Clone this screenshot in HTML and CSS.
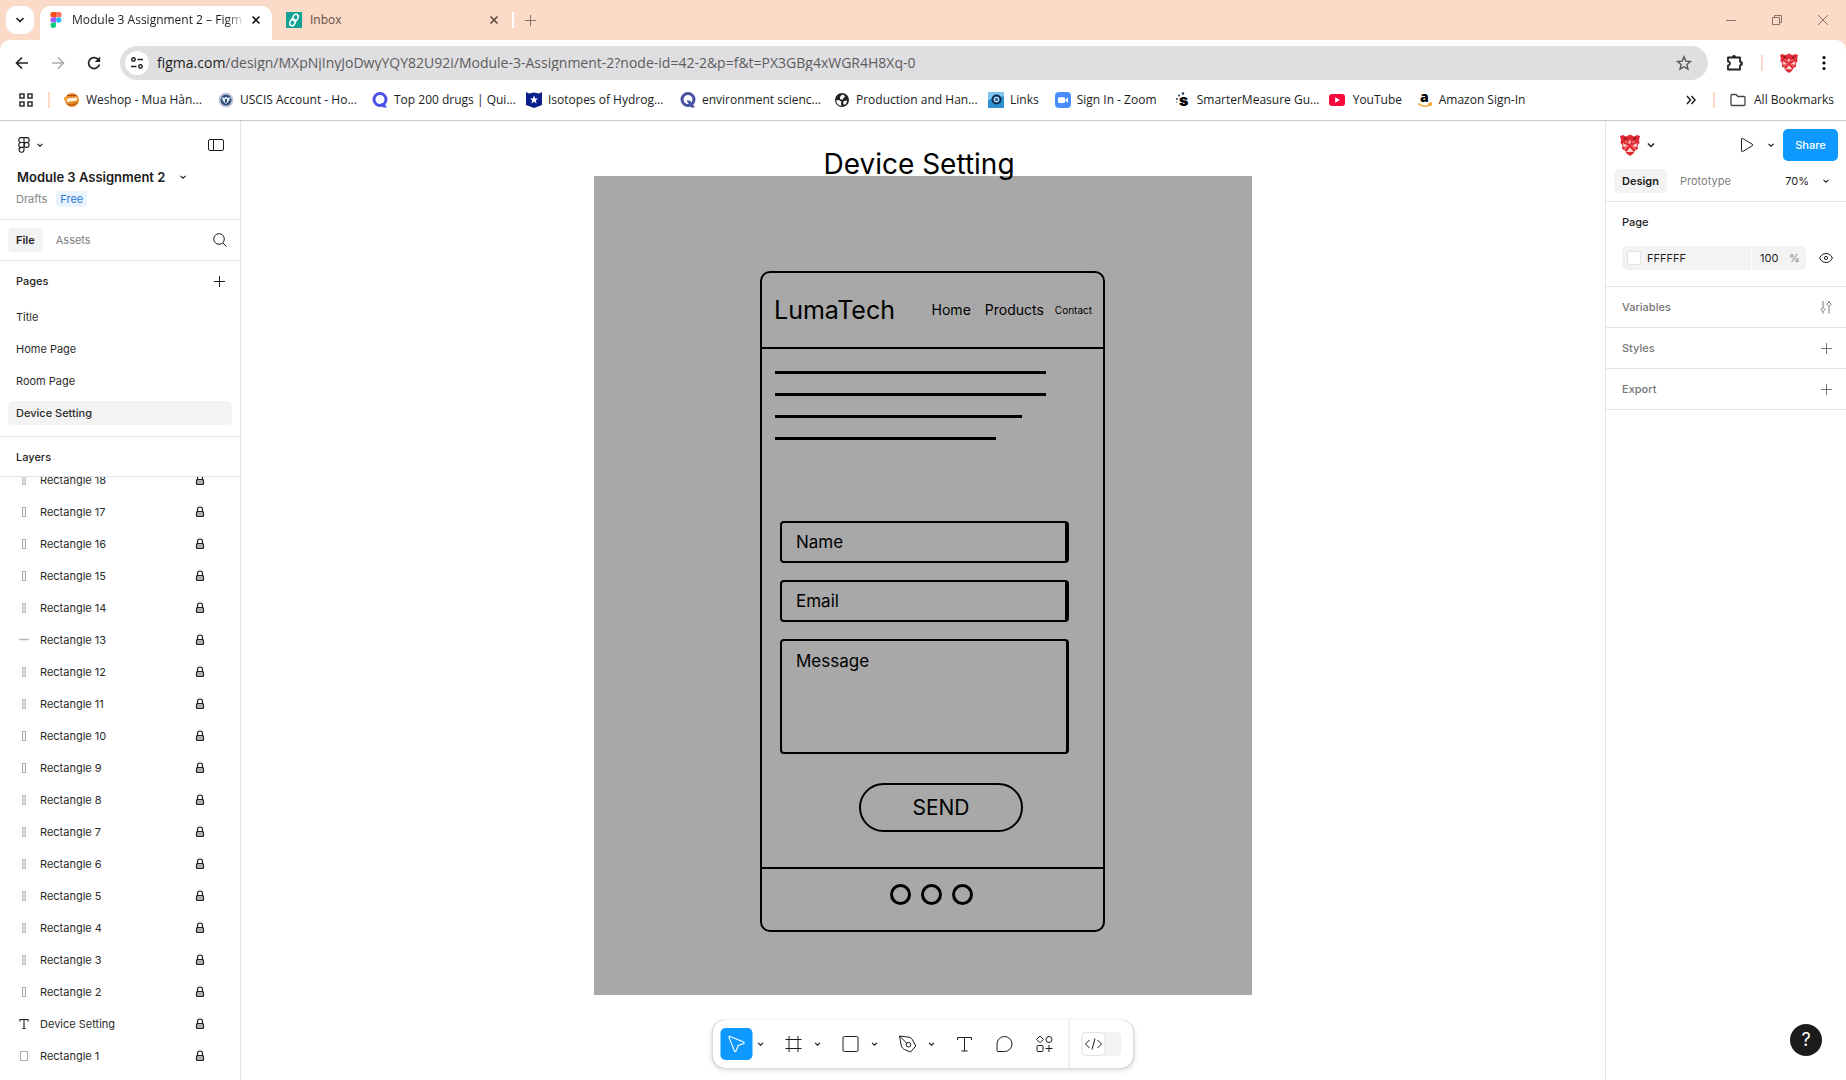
FILE: index.html
```html
<!DOCTYPE html>
<html lang="en">
<head>
<meta charset="utf-8">
<title>Module 3 Assignment 2 – Figma</title>
<link rel="stylesheet" href="styles.css">
</head>
<body>
<svg class="sprite" aria-hidden="true">
  <symbol id="chev" viewBox="0 0 8 8"><path d="M1.5 2.8L4 5.2l2.500-2.400" fill="none" stroke="currentColor" stroke-width="1.100"/></symbol>
  <symbol id="close" viewBox="0 0 10 10"><path d="M1.500 1.500l7 7M8.500 1.500l-7 7" fill="none" stroke="currentColor" stroke-width="1.600"/></symbol>
  <symbol id="plus" viewBox="0 0 12 12"><path d="M6.500 1v11M1 6.500h11" fill="none" stroke="currentColor"/></symbol>
  <symbol id="lock" viewBox="0 0 10 12"><path d="M2.500 5.500V3.500a2.500 2.500 0 0 1 5 0v2" fill="none" stroke="#1c1c1c" stroke-width="1.200"/><rect x="1.500" y="5.500" width="7" height="5" rx="1" fill="#b0b0b0" stroke="#1c1c1c" stroke-width="1.200"/></symbol>
  <symbol id="bar" viewBox="0 0 14 12"><rect x="5.500" y="1.500" width="3" height="9" fill="#fff" stroke="#aaa"/></symbol>
  <symbol id="barfill" viewBox="0 0 14 12"><rect x="5.500" y="1.500" width="3" height="9" fill="#ddd" stroke="#c4c4c4"/></symbol>
  <symbol id="dash" viewBox="0 0 14 12"><path d="M2 5.500h10" stroke="#bbb" stroke-width="1.500"/></symbol>
  <symbol id="box" viewBox="0 0 14 12"><rect x="3.500" y="1.500" width="7" height="9" fill="none" stroke="#aaa"/></symbol>
  <symbol id="tee" viewBox="0 0 14 12"><path d="M3 3.500v-2h8v2M7 1.500v9M5.500 10.500h3" fill="none" stroke="#1c1c1c" stroke-width="1.100"/></symbol>
  <symbol id="crest" viewBox="0 0 20 22">
    <path d="M0 2l3-1 3 1.500L10 .5l4 2L17 1l3 1-1 4 .5 3-2 2.500.5 3.500-3 1.500-1.500 3L10 22l-3.500-2.500-1.500-3-3-1.500.5-3.500L.5 9 1 6z" fill="#e02a34"/>
    <path d="M3 9.500l4 2-3 1.500zM17 9.500l-4 2 3 1.500zM10 14l1.500 2-1.500 2-1.500-2zM9.500 6l1.500 2-2 2zM4 15.500l4.500-4M16 15.500l-4.500-4M6.500 18l3.500-4 3.500 4M5 7.500l3 1M15 7.500l-3 1" fill="#ffd9d9" stroke="#ffc8c8" stroke-width=".7"/>
    <path d="M3 3l4 1.500-1 1.500zM17 3l-4 1.500 1 1.500z" fill="#601018"/>
  </symbol>
</svg>

<header class="browser">
  <div class="tabstrip">
    <button class="tabsearch" aria-label="Search tabs"><svg width="12" height="12" viewBox="0 0 12 12"><path d="M2.500 4l3.500 3.500L9.500 4" fill="none" stroke="#222" stroke-width="1.700"/></svg></button>
    <div class="tab tab-active">
      <svg width="12" height="16" viewBox="0 0 12 16"><path d="M3 0h3v5.300H3A2.650 2.650 0 0 1 3 0z" fill="#f24e1e"/><path d="M6 0h3a2.650 2.650 0 0 1 0 5.300H6z" fill="#ff7262"/><path d="M3 5.300h3v5.300H3a2.650 2.650 0 0 1 0-5.300z" fill="#a259ff"/><circle cx="8.700" cy="8" r="2.650" fill="#1abcfe"/><path d="M3 10.600h3v2.700a2.700 2.700 0 1 1-3-2.700z" fill="#0acf83"/></svg>
      <span class="tab-title">Module 3 Assignment 2 – Figm</span>
      <button class="tab-close" aria-label="Close tab"><svg width="10" height="10"><use href="#close"/></svg></button>
    </div>
    <div class="tab tab-idle">
      <svg width="16" height="16" viewBox="0 0 16 16"><rect width="16" height="16" fill="#12a192"/><g fill="none" stroke="#fff" stroke-width="1.500"><rect x="7" y="2.200" width="4.800" height="7" rx="2.400" transform="rotate(25 9.400 5.700)"/><rect x="4.200" y="6.800" width="4.800" height="7" rx="2.400" transform="rotate(25 6.600 10.300)"/></g></svg>
      <span class="tab-title">Inbox</span>
      <button class="tab-close" aria-label="Close tab"><svg width="10" height="10"><use href="#close"/></svg></button>
    </div>
    <i class="tab-sep"></i>
    <button class="newtab" aria-label="New tab"><svg width="12" height="12"><use href="#plus"/></svg></button>
    <div class="wincontrols">
      <button aria-label="Minimize"><svg width="12" height="12" viewBox="0 0 12 12"><path d="M1 6.500h10" stroke="#8a7166"/></svg></button>
      <button aria-label="Restore"><svg width="12" height="12" viewBox="0 0 12 12"><path d="M1.500 3.500h7v7h-7zM3.500 3.500v-2h7v7h-2" fill="none" stroke="#8a7166"/></svg></button>
      <button aria-label="Close"><svg width="12" height="12" viewBox="0 0 12 12"><path d="M1 1l10 10M11 1L1 11" stroke="#8a7166"/></svg></button>
    </div>
  </div>

  <div class="navbar">
    <button class="navbtn" aria-label="Back"><svg width="16" height="16" viewBox="0 0 16 16"><path d="M14 8H3M8 2.500L2.500 8 8 13.500" fill="none" stroke="#222" stroke-width="1.700"/></svg></button>
    <button class="navbtn" aria-label="Forward"><svg width="16" height="16" viewBox="0 0 16 16"><path d="M2 8h11M8 2.500L13.500 8 8 13.500" fill="none" stroke="#aaa" stroke-width="1.500"/></svg></button>
    <button class="navbtn" aria-label="Reload"><svg width="16" height="16" viewBox="0 0 16 16"><path d="M13.400 9.500A5.500 5.500 0 1 1 12 4.200L13.500 6" fill="none" stroke="#222" stroke-width="1.700"/><path d="M14.200 1.500V7H8.700z" fill="#222"/></svg></button>
    <div class="omnibox">
      <button class="siteinfo" aria-label="Site information"><svg width="14" height="14" viewBox="0 0 14 14"><g fill="none" stroke="#222" stroke-width="1.500"><circle cx="3.500" cy="3.500" r="1.700"/><path d="M7.500 3.500H13M1 10.500h5.500"/><circle cx="10.500" cy="10.500" r="1.700"/></g></svg></button>
      <label for="url">figma.com</label><input id="url" type="text" value="/design/MXpNjInyJoDwyYQY82U92i/Module-3-Assignment-2?node-id=42-2&amp;p=f&amp;t=PX3GBg4xWGR4H8Xq-0">
      <button class="star" aria-label="Bookmark this tab"><svg width="16" height="16" viewBox="0 0 16 16"><path d="M8 1.800l1.800 4.300 4.700.4-3.600 3 1.100 4.600L8 11.700l-4 2.400 1.100-4.600-3.600-3 4.700-.4z" fill="none" stroke="#555" stroke-width="1.300"/></svg></button>
    </div>
    <button class="ext" aria-label="Extensions"><svg width="18" height="18" viewBox="0 0 18 18"><path d="M2 3.500h12v4.200a1.800 1.800 0 0 1 0 3.600v4.200H2v-4a2 2 0 0 0 0-4z" fill="none" stroke="#222" stroke-width="1.800" stroke-linejoin="round"/><path d="M6 3a2 2 0 0 1 4 0zM14.500 7.500a2 2 0 0 1 0 4z" fill="#222"/></svg></button>
    <i class="peach"></i>
    <button class="profile" aria-label="Profile"><svg width="18" height="20"><use href="#crest"/></svg></button>
    <button class="kebab" aria-label="Menu"><svg width="4" height="16" viewBox="0 0 4 16"><circle cx="2" cy="2.500" r="1.600"/><circle cx="2" cy="8" r="1.600"/><circle cx="2" cy="13.500" r="1.600"/></svg></button>
  </div>

  <nav class="bookmarks" aria-label="Bookmarks">
    <button class="apps" aria-label="Apps"><svg width="14" height="14" viewBox="0 0 14 14"><path d="M1 1h4v4H1zM9 1h4v4H9zM1 9h4v4H1zM9 9h4v4H9z" fill="none" stroke="#333" stroke-width="1.600"/></svg></button>
    <i class="peach"></i>
    <a class="bm bm-long" href="#"><svg width="16" height="16" viewBox="0 0 16 16"><circle cx="8" cy="8" r="7" fill="#e88a2a"/><path d="M2 6.500l11-1v3L3 10z" fill="#fff3e2"/><path d="M3 3.500h9M4 12.500c3 1 6 .5 9-1.500" stroke="#9c4d0d" fill="none"/><path d="M0 5l4 1-1 3-3-1z" fill="#f6a53a"/></svg>Weshop - Mua Hàn...</a>
    <a class="bm bm-long" href="#"><svg width="16" height="16" viewBox="0 0 16 16"><circle cx="8" cy="8" r="7.500" fill="#c3cbd8"/><circle cx="8" cy="8" r="5.500" fill="#2d4f7c"/><path d="M3.500 5l3 1L8 4.500 9.500 6l3-1-1.500 4-3 3-3-3z" fill="#e6ebf2"/><path d="M7 7h2v3L8 11 7 10z" fill="#2d4f7c"/></svg>USCIS Account - Ho...</a>
    <a class="bm bm-long" href="#"><svg width="16" height="16" viewBox="0 0 16 16"><circle cx="8" cy="7.500" r="6" fill="none" stroke="#4b52e8" stroke-width="3"/><path d="M9 11h3l3 4.500h-4z" fill="#4b52e8"/></svg>Top 200 drugs | Qui...</a>
    <a class="bm bm-long" href="#"><svg width="16" height="16" viewBox="0 0 16 16"><path d="M0 0l3 1.500L8 .5l5 1L16 0v13l-8 3-8-3z" fill="#0c1e8c"/><path d="M8 3.500l1.200 3H12L9.800 8.400l.8 3L8 9.700l-2.600 1.700.8-3L4 6.500h2.800z" fill="#fff"/></svg>Isotopes of Hydrog...</a>
    <a class="bm bm-long" href="#"><svg width="16" height="16" viewBox="0 0 16 16"><circle cx="8" cy="7.500" r="6" fill="none" stroke="#4553a0" stroke-width="3"/><path d="M6.500 8.500h3.500l5 7h-4z" fill="#4553a0"/></svg>environment scienc...</a>
    <a class="bm bm-long" href="#"><svg width="16" height="16" viewBox="0 0 16 16"><circle cx="8" cy="8" r="7" fill="#222"/><path d="M2.500 8l3 .3 2 1.500-.5 2 .5 2C4 13.500 2 11 2.500 8zM6 5l2-2.500 2 .5 1 2-2 1.500-.5 1.500L6 7zM10 9l3-.5c0 2-1 3.500-2.500 4.500L9 11z" fill="#fff"/></svg>Production and Han...</a>
    <a class="bm" href="#"><svg width="16" height="16" viewBox="0 0 16 16"><rect width="16" height="16" rx="1" fill="#2e8fd0"/><path d="M0 0h16v4L0 8z" fill="#7cc5ee"/><circle cx="8.500" cy="7.500" r="4" fill="#9fd6f5" stroke="#102b4c" stroke-width="2"/><circle cx="8.500" cy="7.500" r="1.500" fill="#2a5b8d"/></svg>Links</a>
    <a class="bm bm-zoom" href="#"><svg width="16" height="16" viewBox="0 0 16 16"><rect width="16" height="16" rx="4" fill="#4a8cff"/><rect x="3" y="5.200" width="7" height="5.800" rx="1.300" fill="#fff"/><path d="M10.500 7.400L13 5.500v5.200l-2.500-1.800z" fill="#fff"/></svg>Sign In - Zoom</a>
    <a class="bm bm-long" href="#"><svg width="16" height="16" viewBox="0 0 16 16"><text x="4" y="14" class="ico-s">s</text><g fill="#1d3557"><circle cx="2" cy="7" r=".9"/><circle cx="4" cy="3.500" r="1"/><circle cx="8" cy="1.500" r="1.200"/><circle cx="1.500" cy="10" r=".6"/></g></svg>SmarterMeasure Gu...</a>
    <a class="bm bm-yt" href="#"><svg width="18" height="16" viewBox="0 0 18 16"><rect y="2" width="16" height="12" rx="3" fill="#f6083c"/><path d="M6.200 5.300L11 8l-4.800 2.700z" fill="#fff"/></svg>YouTube</a>
    <a class="bm" href="#"><svg width="16" height="16" viewBox="0 0 16 16"><text x="3" y="10" class="ico-a">a</text><path d="M1 11.500c4 3.300 9 3.300 12.500.8M11.500 11.500l2.800-.2-.8 2.700" fill="none" stroke="#f59d1b" stroke-width="1.500"/></svg>Amazon Sign-In</a>
    <button class="more" aria-label="More bookmarks"><svg width="10" height="10" viewBox="0 0 10 10"><path d="M1 1l3.500 4L1 9M5.500 1L9 5 5.500 9" fill="none" stroke="#222" stroke-width="1.500"/></svg></button>
    <i class="peach"></i>
    <a class="bm bm-all" href="#"><svg width="16" height="14" viewBox="0 0 16 14"><path d="M1 2.500a1 1 0 0 1 1-1h4L8 3.500h6a1 1 0 0 1 1 1v7a1 1 0 0 1-1 1H2a1 1 0 0 1-1-1z" fill="none" stroke="#444" stroke-width="1.300"/></svg>All Bookmarks</a>
  </nav>
</header>

<div class="app">
  <aside class="left">
    <section class="filehead">
      <div class="row">
        <button class="menu" aria-label="Main menu"><svg width="12" height="16" viewBox="0 0 12 16"><path d="M6 .6H3.200a2.450 2.450 0 0 0 0 4.900H6zM6 .6h2.800a2.450 2.450 0 0 1 0 4.900H6zM6 5.500H3.200a2.450 2.450 0 0 0 0 4.900H6zM6 10.400H3.200A2.450 2.450 0 1 0 6 12.800z" fill="none" stroke="#1c1c1c" stroke-width="1.100"/><circle cx="8.600" cy="7.950" r="2.450" fill="none" stroke="#1c1c1c" stroke-width="1.100"/></svg><svg width="8" height="8"><use href="#chev"/></svg></button>
        <button class="push" aria-label="Minimize UI"><svg width="16" height="12" viewBox="0 0 16 12"><rect x=".5" y=".5" width="15" height="11" rx="1.500" fill="none" stroke="#1c1c1c"/><path d="M5.500 .5v11" stroke="#1c1c1c"/></svg></button>
      </div>
      <button class="filename">Module 3 Assignment 2<svg width="8" height="8"><use href="#chev"/></svg></button>
      <div class="crumbs"><a href="#">Drafts</a><span class="badge">Free</span></div>
    </section>
    <div class="lefttabs">
      <button class="pill pill-on">File</button><button class="pill">Assets</button>
      <button class="push" aria-label="Search"><svg width="14" height="14" viewBox="0 0 14 14"><circle cx="6" cy="6" r="5.300" fill="none" stroke="#1c1c1c"/><path d="M9.800 9.800L13.500 13.500" stroke="#1c1c1c"/></svg></button>
    </div>
    <section class="pages">
      <div class="sectionhead"><h2>Pages</h2><button class="push" aria-label="Add page"><svg width="12" height="12"><use href="#plus"/></svg></button></div>
      <ul>
        <li><a href="#">Title</a></li>
        <li><a href="#">Home Page</a></li>
        <li><a href="#">Room Page</a></li>
        <li><a href="#" class="current">Device Setting</a></li>
      </ul>
    </section>
    <div class="sectionhead layershead"><h2>Layers</h2></div>
    <ul class="layers">
      <li><svg><use href="#barfill"/></svg><span>Rectangle 18</span><svg class="lock"><use href="#lock"/></svg></li>
      <li><svg><use href="#bar"/></svg><span>Rectangle 17</span><svg class="lock"><use href="#lock"/></svg></li>
      <li><svg><use href="#bar"/></svg><span>Rectangle 16</span><svg class="lock"><use href="#lock"/></svg></li>
      <li><svg><use href="#bar"/></svg><span>Rectangle 15</span><svg class="lock"><use href="#lock"/></svg></li>
      <li><svg><use href="#barfill"/></svg><span>Rectangle 14</span><svg class="lock"><use href="#lock"/></svg></li>
      <li><svg><use href="#dash"/></svg><span>Rectangle 13</span><svg class="lock"><use href="#lock"/></svg></li>
      <li><svg><use href="#barfill"/></svg><span>Rectangle 12</span><svg class="lock"><use href="#lock"/></svg></li>
      <li><svg><use href="#barfill"/></svg><span>Rectangle 11</span><svg class="lock"><use href="#lock"/></svg></li>
      <li><svg><use href="#bar"/></svg><span>Rectangle 10</span><svg class="lock"><use href="#lock"/></svg></li>
      <li><svg><use href="#bar"/></svg><span>Rectangle 9</span><svg class="lock"><use href="#lock"/></svg></li>
      <li><svg><use href="#barfill"/></svg><span>Rectangle 8</span><svg class="lock"><use href="#lock"/></svg></li>
      <li><svg><use href="#barfill"/></svg><span>Rectangle 7</span><svg class="lock"><use href="#lock"/></svg></li>
      <li><svg><use href="#barfill"/></svg><span>Rectangle 6</span><svg class="lock"><use href="#lock"/></svg></li>
      <li><svg><use href="#barfill"/></svg><span>Rectangle 5</span><svg class="lock"><use href="#lock"/></svg></li>
      <li><svg><use href="#barfill"/></svg><span>Rectangle 4</span><svg class="lock"><use href="#lock"/></svg></li>
      <li><svg><use href="#barfill"/></svg><span>Rectangle 3</span><svg class="lock"><use href="#lock"/></svg></li>
      <li><svg><use href="#bar"/></svg><span>Rectangle 2</span><svg class="lock"><use href="#lock"/></svg></li>
      <li><svg><use href="#tee"/></svg><span>Device Setting</span><svg class="lock"><use href="#lock"/></svg></li>
      <li><svg><use href="#box"/></svg><span>Rectangle 1</span><svg class="lock"><use href="#lock"/></svg></li>
    </ul>
  </aside>

  <main class="canvas">
    <h1 class="artname">Device Setting</h1>
    <div class="artboard">
      <div class="phone">
        <div class="phone-head">
          <strong>LumaTech</strong>
          <a href="#" class="l-home">Home</a><a href="#" class="l-products">Products</a><a href="#" class="l-contact">Contact</a>
        </div>
        <form class="phone-body">
          <div class="copy"><i></i><i></i><i class="mid"></i><i class="short"></i></div>
          <label class="field">Name<input type="text"></label>
          <label class="field">Email<input type="text"></label>
          <label class="field field-tall">Message<textarea></textarea></label>
          <button class="send" type="button">SEND</button>
        </form>
        <div class="phone-foot"><i></i><i></i><i></i></div>
      </div>
    </div>

    <div class="toolbar" role="toolbar" aria-label="Tools">
      <button class="tool tool-on" aria-label="Move"><svg width="18" height="18" viewBox="0 0 18 18"><path d="M1.500 2.400c-.3-.8.300-1.300 1-1l13.700 5.500c.8.300.7 1.300 0 1.600L10.700 10.500 8.500 16c-.3.800-1.300.8-1.600 0z" fill="none" stroke="#fff" stroke-width="1.100"/></svg></button>
      <button class="drop" aria-label="Move tools"><svg width="8" height="8"><use href="#chev"/></svg></button>
      <button class="tool" aria-label="Frame"><svg width="16" height="16" viewBox="0 0 16 16"><path d="M3.500 0v16M12.500 0v16M0 3.500h16M0 12.500h16" stroke="#1c1c1c"/></svg></button>
      <button class="drop" aria-label="Region tools"><svg width="8" height="8"><use href="#chev"/></svg></button>
      <button class="tool" aria-label="Rectangle"><svg width="16" height="16" viewBox="0 0 16 16"><rect x=".5" y=".5" width="15" height="15" rx="1.500" fill="none" stroke="#1c1c1c"/></svg></button>
      <button class="drop" aria-label="Shape tools"><svg width="8" height="8"><use href="#chev"/></svg></button>
      <button class="tool" aria-label="Pen"><svg width="18" height="18" viewBox="0 0 18 18"><g fill="none" stroke="#1c1c1c"><path d="M1 1l9.500 1.200c1.500.3 2.800 1.300 3.500 2.700l3.300 6.100-5.300 6-6-2.500c-1.600-.7-2.800-2-3.200-3.700z" stroke-linejoin="round"/><path d="M1 1l7.300 7.300"/><circle cx="10" cy="9.700" r="2.300"/></g></svg></button>
      <button class="drop" aria-label="Drawing tools"><svg width="8" height="8"><use href="#chev"/></svg></button>
      <button class="tool" aria-label="Text"><svg width="16" height="16" viewBox="0 0 16 16"><path d="M1 4V1.500h14V4M8 1.500v13.500M5 15h6" fill="none" stroke="#1c1c1c"/></svg></button>
      <button class="tool gap" aria-label="Comment"><svg width="16" height="16" viewBox="0 0 16 16"><path d="M.5 8A7.500 7.500 0 1 1 8 15.500H1.500a1 1 0 0 1-1-1z" fill="none" stroke="#1c1c1c"/></svg></button>
      <button class="tool gap" aria-label="Actions"><svg width="18" height="18" viewBox="0 0 18 18"><g fill="none" stroke="#1c1c1c"><path d="M4.500 1l3.400 3.400-3.400 3.400L1.100 4.400z" stroke-linejoin="round"/><circle cx="13.500" cy="4.500" r="3"/><rect x="1.500" y="10.500" width="6" height="6" rx="1"/><path d="M13.500 10v7M10 13.500h7"/></g></svg></button>
      <i class="toolsep"></i>
      <button class="devmode" aria-label="Dev Mode"><svg width="24" height="24" viewBox="0 0 24 24"><rect x=".5" y=".5" width="23" height="23" rx="4.500" fill="#fff" stroke="#e2e2e2"/><path d="M8 8l-4 4 4 4M16 8l4 4-4 4M13.500 6.500l-3 11" fill="none" stroke="#1c1c1c"/></svg></button>
    </div>
  </main>

  <aside class="right">
    <section class="share">
      <div class="row">
        <button class="who" aria-label="Account"><svg width="20" height="22"><use href="#crest"/></svg><svg width="10" height="10"><use href="#chev"/></svg></button>
        <button class="play push" aria-label="Present"><svg width="14" height="16" viewBox="0 0 14 16"><path d="M1.500 2v12c0 .6.500.9 1 .6l10-5.900c.5-.3.500-1 0-1.300l-10-6c-.5-.300-1 0-1 .6z" fill="none" stroke="#1c1c1c"/></svg></button>
        <button class="drop" aria-label="Present options"><svg width="8" height="8"><use href="#chev"/></svg></button>
        <button class="sharebtn">Share</button>
      </div>
      <div class="righttabs"><button class="pill pill-on">Design</button><button class="pill">Prototype</button><button class="zoom push">70%<svg width="8" height="8"><use href="#chev"/></svg></button></div>
    </section>
    <section class="pageprops">
      <h2>Page</h2>
      <div class="fill">
        <div class="fillfield"><i></i><input class="hex" aria-label="Color" value="FFFFFF"><input class="pct" id="pct" aria-label="Opacity" value="100"><label for="pct">%</label></div>
        <button aria-label="Toggle visibility"><svg width="14" height="12" viewBox="0 0 14 12"><path d="M.6 6C2 3 4.300 1.500 7 1.500S12 3 13.400 6C12 9 9.700 10.500 7 10.500S2 9 .6 6z" fill="none" stroke="#1c1c1c"/><circle cx="7" cy="6" r="1.600" fill="none" stroke="#1c1c1c"/></svg></button>
      </div>
    </section>
    <section class="prop"><h2>Variables</h2><button aria-label="Open variables"><svg width="12" height="14" viewBox="0 0 12 14"><g fill="none" stroke="#777"><path d="M3 1v6.500M3 12v1.500M9 1v1M9 6.500v7"/><path d="M3 7.300l2.200 2.200L3 11.700.8 9.500zM9 2l2.200 2.200L9 6.400 6.800 4.200z"/></g></svg></button></section>
    <section class="prop"><h2>Styles</h2><button aria-label="Add style"><svg width="12" height="12"><use href="#plus"/></svg></button></section>
    <section class="prop"><h2>Export</h2><button aria-label="Add export"><svg width="12" height="12"><use href="#plus"/></svg></button></section>
    <button class="help" aria-label="Help">?</button>
  </aside>
</div>
</body>
</html>
```
FILE: styles.css
```css
* { box-sizing: border-box; }
body {
  margin: 0;
  height: 100vh;
  display: flex;
  flex-direction: column;
  overflow: hidden;
  background: #fff;
  color: #1c1c1c;
  font: 11px/16px Inter, sans-serif;
}
button, input, textarea { margin: 0; padding: 0; border: 0; background: none; color: inherit; font: inherit; outline: 0; }
button { display: flex; align-items: center; justify-content: center; flex: none; }
a { color: inherit; text-decoration: none; }
ul { margin: 0; padding: 0; list-style: none; }
h1, h2 { margin: 0; font: inherit; }
svg { flex: none; display: block; overflow: visible; }
.sprite { position: absolute; width: 0; height: 0; }
.push { margin-left: auto; }

/* browser chrome */
.browser {
  flex: none;
  background: #fcdac8;
  border-bottom: 1px solid #c9c9c9;
  font: 12px/16px "Open Sans", sans-serif;
}
.tabstrip { display: flex; align-items: center; height: 40px; padding-left: 6px; }
.tabsearch { width: 28px; height: 28px; border-radius: 10px; background: #fff; }
.tab { display: flex; align-items: center; }
.tab-title { flex: 1; white-space: nowrap; }
.tab-close { width: 16px; height: 16px; }
.tab-active {
  align-self: flex-end;
  width: 232px;
  height: 34px;
  margin-left: 6px;
  padding: 0 8px 6px 10px;
  gap: 10px;
  border-radius: 10px 10px 0 0;
  background: #fff;
}
.tab-active .tab-close { margin-left: -6px; }
.tab-active .tab-title { -webkit-mask-image: linear-gradient(90deg, #000 90%, transparent); mask-image: linear-gradient(90deg, #000 90%, transparent); }
.tab-idle { width: 216px; margin-left: 14px; gap: 8px; color: #5b4a42; }
.tab-sep { width: 2px; height: 16px; margin: 0 8px 0 10px; background: #fff; }
.newtab { width: 16px; height: 16px; color: #8a7166; }
.wincontrols { display: flex; margin-left: auto; }
.wincontrols button { width: 46px; height: 40px; }

.navbar { display: flex; align-items: center; height: 46px; padding: 0 14px 0 4px; border-radius: 10px 10px 0 0; background: #fff; }
.navbtn { width: 36px; height: 34px; }
.omnibox {
  flex: 1;
  display: flex;
  align-items: center;
  height: 34px;
  margin: 0 16px 0 8px;
  padding: 0 16px 0 5px;
  border-radius: 17px;
  background: #dfdfe1;
  font-size: 14px;
}
.siteinfo { width: 24px; height: 24px; margin-right: 8px; border-radius: 12px; background: #fff; }
.omnibox input { flex: 1; color: #5c5c5e; }
.peach { width: 2px; height: 16px; flex: none; background: #fcdac8; }
.ext { width: 22px; margin-right: 15px; }
.profile { width: 18px; margin-left: 17px; }
.kebab { width: 16px; margin-left: 18px; }

.bookmarks { display: flex; align-items: center; height: 34px; padding: 0 12px 6px 19px; background: #fff; white-space: nowrap; }
.apps { margin-right: 15px; }
.bm { display: flex; align-items: center; gap: 6px; margin-right: 16px; }
.apps + .peach + .bm { margin-left: 14px; }
.bm-long { width: 138px; }
.bm-zoom { width: 104px; }
.bm-yt { width: 72px; }
.bm-all { gap: 8px; margin: 0 0 0 15px; }
.more { margin: 0 17px 0 auto; }
.ico-s { font: 900 16px Inter, sans-serif; }
.ico-a { font: 800 14px "Open Sans", sans-serif; }

/* editor */
.app { flex: 1; min-height: 0; display: grid; grid-template-columns: 241px 1fr 241px; }
.left { display: flex; flex-direction: column; min-height: 0; border-right: 1px solid #e4e4e4; }
.row { display: flex; align-items: center; }
.filehead { padding: 12px 16px 10px; height: 99px; border-bottom: 1px solid #e4e4e4; }
.filehead .row { height: 24px; }
.menu { gap: 6px; padding-left: 2px; }
.filename { gap: 14px; margin-top: 10px; padding-left: 1px; height: 20px; font-size: 13px; font-weight: 600; }
.crumbs { display: flex; align-items: center; gap: 9px; margin-top: 4px; color: #858585; }
.badge { padding: 0 4px; border-radius: 4px; background: #e9f4ff; color: #2a78d6; }
.lefttabs { display: flex; align-items: center; height: 41px; padding: 0 13px 0 8px; border-bottom: 1px solid #e4e4e4; }
.pill { height: 24px; padding: 0 8px; border-radius: 5px; color: #808080; }
.pill-on { margin-right: 5px; background: #f3f3f3; color: #1c1c1c; font-weight: 600; }
.sectionhead { display: flex; align-items: center; height: 40px; padding: 0 15px 0 16px; font-weight: 500; }
.pages { padding-bottom: 7px; border-bottom: 1px solid #e4e4e4; }
.pages ul { display: grid; gap: 8px; padding: 4px 8px; }
.pages a { display: block; padding: 4px 8px; border-radius: 5px; color: #2c2c2c; }
.pages .current { background: #f3f3f3; font-weight: 500; }
.layershead { flex: none; border-bottom: 1px solid #e4e4e4; }
.layers { flex: 1; min-height: 0; display: flex; flex-direction: column; justify-content: flex-end; overflow: hidden; padding-bottom: 8px; color: #2c2c2c; }
.layers li { display: flex; align-items: center; flex: none; height: 32px; padding: 0 35px 0 17px; }
.layers svg { width: 14px; height: 12px; }
.layers span { flex: 1; margin-left: 9px; }
.layers .lock { width: 10px; }

.canvas { position: relative; min-width: 0; overflow: hidden; padding-top: 55px; }
.artname { position: absolute; top: 25px; left: 0; right: 8px; text-align: center; font-size: 28px; line-height: 36px; color: #000; }
.artboard { width: 658px; height: 819px; margin: 0 auto; padding: 95px 147px 0 166px; background: #a8a8a8; color: #000; }
.phone { display: flex; flex-direction: column; height: 661px; border: 2px solid #000; border-radius: 10px; }
.phone-head { display: flex; align-items: center; height: 76px; padding: 0 11px 0 12px; border-bottom: 2px solid #000; }
.phone-head strong { flex: 1; font-size: 25px; line-height: 32px; font-weight: 400; }
.l-home, .l-products { margin-right: 14px; font-size: 14px; }
.phone-head .l-products { margin-right: 11px; }
.l-contact { font-size: 10px; }
.phone-body { flex: 1; display: flex; flex-direction: column; padding: 22px 34px 0 18px; }
.copy { display: grid; gap: 19px; height: 134px; margin: 0 0 16px -5px; align-content: start; }
.copy i { width: 271px; height: 3px; background: #000; }
.copy .mid { width: 247px; }
.copy .short { width: 221px; }
.field { display: flex; align-items: center; height: 42px; margin-bottom: 17px; padding-left: 14px; border: 2px solid #000; border-right-width: 4px; border-radius: 4px; font-size: 17px; line-height: 24px; }
.field input, .field textarea { flex: 1; min-width: 0; resize: none; }
.field-tall { align-items: flex-start; height: 115px; margin-bottom: 29px; padding-top: 8px; border-right-width: 3px; }
.send { width: 164px; height: 49px; margin-left: 79px; border: 2px solid #000; border-radius: 25px; font-size: 21px; }
.phone-foot { display: flex; justify-content: center; gap: 10px; height: 63px; padding: 15px 2px 0 0; border-top: 2px solid #000; }
.phone-foot i { width: 21px; height: 21px; border: 3px solid #000; border-radius: 50%; }

.toolbar {
  position: absolute;
  left: 50%;
  bottom: 12px;
  transform: translateX(-50%);
  display: flex;
  align-items: center;
  height: 48px;
  padding: 0 12px 0 8px;
  border-radius: 13px;
  background: #fff;
  box-shadow: 0 0 1px rgba(0,0,0,.25), 0 2px 5px rgba(0,0,0,.16);
}
.tool { width: 32px; height: 32px; border-radius: 5px; }
.tool-on { background: #0d99ff; }
.drop { width: 16px; height: 32px; }
.toolbar .drop { margin-right: 9px; }
.gap { margin-left: 8px; }
.toolsep { align-self: stretch; width: 1px; margin: 0 12px 0 8px; background: #e4e4e4; }
.devmode { width: 40px; height: 24px; justify-content: flex-start; border-radius: 5px; background: #f3f3f3; }

.right { position: relative; border-left: 1px solid #e4e4e4; }
.share { height: 81px; padding: 8px 8px 0; border-bottom: 1px solid #e4e4e4; }
.who { gap: 6px; margin-left: 6px; }
.play { width: 24px; height: 24px; }
.share .drop { margin: 0 4px; }
.sharebtn { width: 55px; height: 32px; border-radius: 5px; background: #0d99ff; color: #fff; font-weight: 500; }
.righttabs { display: flex; align-items: center; margin-top: 8px; }
.zoom { gap: 13px; padding-right: 8px; }
.pageprops { height: 85px; padding: 12px 12px 0 16px; border-bottom: 1px solid #e4e4e4; font-weight: 500; }
.fill { display: flex; align-items: center; justify-content: space-between; margin-top: 16px; font-weight: 400; }
.fill > button { width: 16px; }
.fillfield { display: flex; align-items: center; width: 184px; height: 24px; padding-left: 5px; border-radius: 5px; background: #f3f3f3; }
.fillfield i { width: 14px; height: 14px; border: 1px solid #e4e4e4; border-radius: 2px; background: #fff; }
.hex { width: 104px; margin-left: 6px; }
.pct { width: 38px; height: 24px; padding-left: 8px; border-left: 1px solid #fff; }
.fillfield label { color: #858585; }
.prop { display: flex; align-items: center; justify-content: space-between; height: 41px; padding: 0 14px 0 16px; border-bottom: 1px solid #e4e4e4; color: #777; font-weight: 500; }
.help { position: absolute; right: 24px; bottom: 24px; width: 32px; height: 32px; border-radius: 50%; background: #1c1c1c; color: #fff; font-size: 18px; }
```
